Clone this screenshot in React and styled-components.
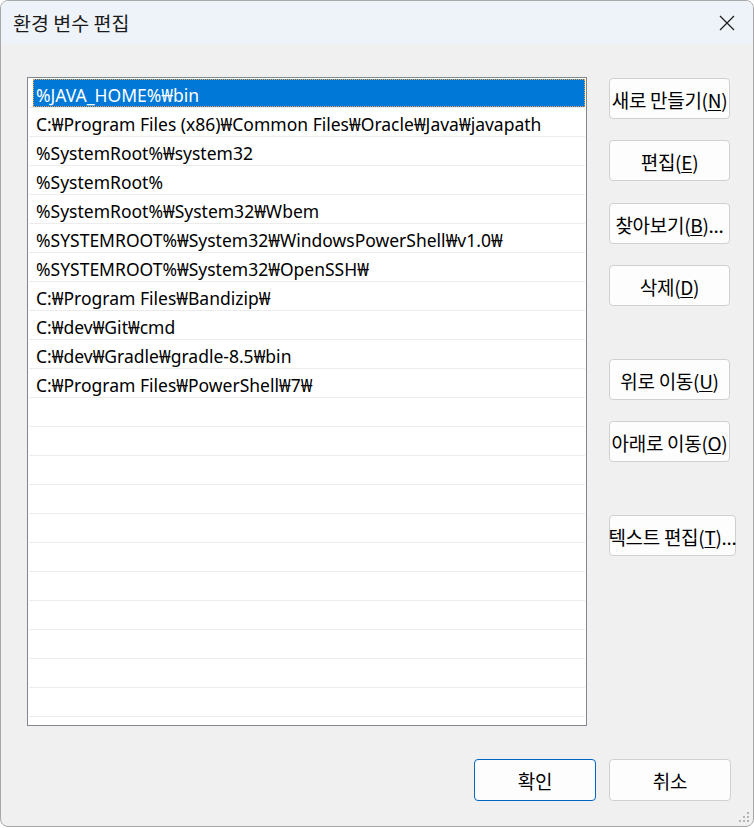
import React from 'react';
import styled, {createGlobalStyle} from "styled-components";

const GlobalStyle = createGlobalStyle`
  html, body {
    margin: 0;
    padding: 0;
    background: #ffffff;
  }
  body {
    font-family: "Noto Sans", "Noto Sans CJK KR", sans-serif;
  }
`;

const Window = styled.div`
  width: 754px;
  height: 827px;
  box-sizing: border-box;
  border: 1px solid #a8a8a8;
  border-radius: 8px;
  overflow: hidden;
  background: #f0f0f0;
  display: flex;
  flex-direction: column;
  position: relative;
`;

const TitleBar = styled.div`
  height: 43px;
  background: #eef3f9;
  display: flex;
  align-items: center;
  justify-content: space-between;
  padding: 0 18px 0 12px;
  flex-shrink: 0;
`;

const Title = styled.div`
  font-family: "Noto Sans CJK KR", sans-serif;
  font-size: 19.5px;
  color: #1a1a1a;
`;

const Close = styled.div`
  width: 16px;
  height: 16px;
  display: flex;
`;

const Body = styled.div`
  flex: 1;
  display: flex;
  padding: 33px 0 0 26px;
`;

const List = styled.div`
  width: 560px;
  height: 649px;
  box-sizing: border-box;
  border: 1px solid #82878f;
  background: #ffffff;
  padding-top: 1px;
  overflow: hidden;
`;

const Row = styled.div`
  height: 29px;
  box-sizing: border-box;
  border-bottom: 1px solid #ececec;
  margin-left: 1px;
  margin-right: 1px;
  display: flex;
`;

const Cell = styled.div`
  flex: 1;
  margin-left: 4px;
  height: 28px;
  box-sizing: border-box;
  padding: 3px 0 0 3px;
  display: flex;
  align-items: center;
  font-size: 17.5px;
  white-space: nowrap;
  color: ${({selected}) => (selected ? "#ffffff" : "#000000")};
  background: ${({selected}) => (selected ? "#0078d7" : "transparent")};
  outline: ${({selected}) => (selected ? "1px dotted #f5a048" : "none")};
  outline-offset: -1px;
`;

const Side = styled.div`
  display: flex;
  flex-direction: column;
  margin-left: 22px;
  padding-top: 1px;
`;

const Button = styled.div`
  width: ${({wide, footer}) => (wide ? "127px" : footer ? "122px" : "121px")};
  height: ${({footer}) => (footer ? "42px" : "41px")};
  box-sizing: border-box;
  margin-top: ${({space}) => space || 0}px;
  border: 1px solid ${({primary}) => (primary ? "#0067c0" : "#d0d0d0")};
  border-radius: 4px;
  background: #fdfdfd;
  display: flex;
  align-items: center;
  justify-content: center;
  padding-top: 1px;
  font-family: "Noto Sans CJK KR", sans-serif;
  font-size: 19px;
  color: #000000;
  white-space: nowrap;
  letter-spacing: -0.3px;

  u {
    text-decoration: underline;
    text-decoration-thickness: 1px;
    text-underline-offset: 2px;
  }
`;

const Footer = styled.div`
  display: flex;
  justify-content: flex-end;
  gap: 13px;
  padding: 0 22px 25px 0;
`;

const Grip = styled.svg`
  position: absolute;
  right: 3px;
  bottom: 3px;
`;

const paths = [
  "%JAVA_HOME%₩bin",
  "C:₩Program Files (x86)₩Common Files₩Oracle₩Java₩javapath",
  "%SystemRoot%₩system32",
  "%SystemRoot%",
  "%SystemRoot%₩System32₩Wbem",
  "%SYSTEMROOT%₩System32₩WindowsPowerShell₩v1.0₩",
  "%SYSTEMROOT%₩System32₩OpenSSH₩",
  "C:₩Program Files₩Bandizip₩",
  "C:₩dev₩Git₩cmd",
  "C:₩dev₩Gradle₩gradle-8.5₩bin",
  "C:₩Program Files₩PowerShell₩7₩",
];

const rows = [...paths, ...Array(12).fill("")];

const App = () => {
  return (
    <>
      <GlobalStyle />
      <Window>
        <TitleBar>
          <Title>환경 변수 편집</Title>
          <Close>
            <svg width="16" height="16" viewBox="0 0 16 16">
              <path d="M1 1L15 15M15 1L1 15" stroke="#1a1a1a" strokeWidth="1.2" />
            </svg>
          </Close>
        </TitleBar>
        <Body>
          <List>
            {rows.map((text, index) => (
              <Row key={index}>
                <Cell selected={index === 0}>{text}</Cell>
              </Row>
            ))}
          </List>
          <Side>
            <Button>새로 만들기(<u>N</u>)</Button>
            <Button space={21}>편집(<u>E</u>)</Button>
            <Button space={22}>찾아보기(<u>B</u>)...</Button>
            <Button space={21}>삭제(<u>D</u>)</Button>
            <Button space={53}>위로 이동(<u>U</u>)</Button>
            <Button space={21}>아래로 이동(<u>O</u>)</Button>
            <Button space={53} wide>텍스트 편집(<u>T</u>)...</Button>
          </Side>
        </Body>
        <Footer>
          <Button primary footer>확인</Button>
          <Button footer>취소</Button>
        </Footer>
        <Grip width="12" height="12" viewBox="0 0 12 12">
          <rect x="9" y="1" width="2" height="2" fill="#b4b4b4" />
          <rect x="5" y="5" width="2" height="2" fill="#b4b4b4" />
          <rect x="9" y="5" width="2" height="2" fill="#b4b4b4" />
          <rect x="1" y="9" width="2" height="2" fill="#b4b4b4" />
          <rect x="5" y="9" width="2" height="2" fill="#b4b4b4" />
          <rect x="9" y="9" width="2" height="2" fill="#b4b4b4" />
        </Grip>
      </Window>
    </>
  );
};

export default App;
